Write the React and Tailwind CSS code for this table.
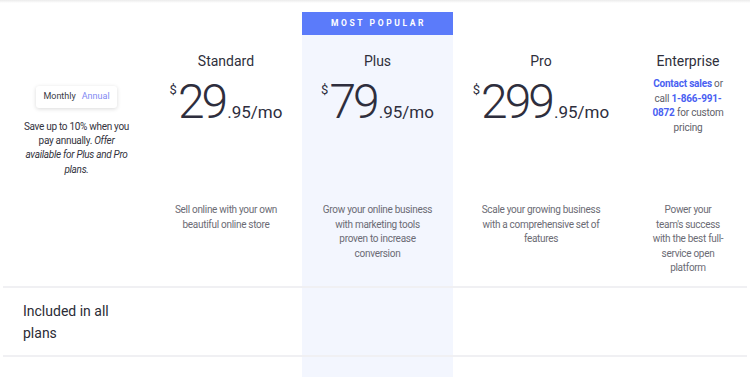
import React from "react";

const plans = [
  {
    name: "Standard",
    dollars: "29",
    desc: "Sell online with your own beautiful online store",
    pad: "px-[20px]",
  },
  {
    name: "Plus",
    dollars: "79",
    desc: "Grow your online business with marketing tools proven to increase conversion",
    pad: "px-[18px]",
    popular: true,
  },
  {
    name: "Pro",
    dollars: "299",
    desc: "Scale your growing business with a comprehensive set of features",
    pad: "px-[24px]",
  },
];

const Price = ({ dollars }) => (
  <div className="flex items-baseline justify-center text-[#2e2e3d]">
    <span className="self-start mt-[5px] text-[13px] leading-none">$</span>
    <span className="text-[48px] leading-none font-light tracking-[-3px] ml-[1px]">
      {dollars}
    </span>
    <span className="text-[17px] leading-none ml-[2px]">.95/mo</span>
  </div>
);

const PlanCell = ({ plan }) => {
  const body = (
    <>
      <h3 className="text-[14px] leading-[20px] text-[#2f2f3b]">{plan.name}</h3>
      <div className="h-[132px] pt-[7px]">
        <Price dollars={plan.dollars} />
      </div>
      <p className={`${plan.pad} text-[10px] leading-[14.5px] tracking-[-0.3px] text-[#6b6b74]`}>
        {plan.desc}
      </p>
    </>
  );

  if (plan.popular) {
    return (
      <div className="flex flex-col pt-[9px] text-center">
        <div className="h-[23px] bg-[#5b7bfa] flex items-center justify-center">
          <span className="text-[8.5px] font-bold tracking-[2.6px] text-white pl-[2px]">
            MOST POPULAR
          </span>
        </div>
        <div className="flex-1 bg-[#f3f6fe] pt-[16px]">{body}</div>
      </div>
    );
  }

  return <div className="pt-[48px] text-center">{body}</div>;
};

export default function App() {
  return (
    <div className="w-[750px] h-[377px] overflow-hidden bg-white font-['Roboto',sans-serif]">
      <div className="h-[3px] bg-gradient-to-b from-[#ebebeb] to-white" />

      <div className="px-[3px]">
        <div className="grid grid-cols-[147px_152px_151px_176px_118px] h-[285px] border-b-2 border-[#f0f0f3]">
          <div className="pt-[83px] text-center">
            <div className="mx-auto w-[81px] h-[22px] bg-white rounded-[3px] shadow-[0_1px_4px_rgba(0,0,0,0.15)] flex items-center justify-center gap-[6px] text-[9px]">
              <span className="text-[#3a3a46]">Monthly</span>
              <span className="text-[#7f89f3]">Annual</span>
            </div>
            <p className="mt-[12px] px-[18px] text-[10px] leading-[14.2px] tracking-[-0.3px] text-[#33333d]">
              Save up to 10% when you pay annually.{" "}
              <em>Offer available for Plus and Pro plans.</em>
            </p>
          </div>

          {plans.map((plan) => (
            <PlanCell key={plan.name} plan={plan} />
          ))}

          <div className="pt-[48px] text-center">
            <h3 className="text-[14px] leading-[20px] text-[#2f2f3b]">Enterprise</h3>
            <div className="h-[132px] pt-[6px] px-[18px]">
              <p className="text-[10px] leading-[14.5px] tracking-[-0.2px] text-[#5f5f69]">
                <span className="font-bold text-[#4a5ff2]">Contact sales</span> or call{" "}
                <span className="font-bold text-[#4a5ff2]">1-866-991-0872</span> for custom
                pricing
              </p>
            </div>
            <p className="px-[22px] text-[10px] leading-[14.5px] tracking-[-0.3px] text-[#6b6b74]">
              Power your team's success with the best full-service open platform
            </p>
          </div>
        </div>

        <div className="grid grid-cols-[147px_152px_151px_176px_118px] h-[69px] border-b-2 border-[#f0f0f3]">
          <div className="pt-[12px] pl-[20px]">
            <h2 className="w-[110px] text-[14px] leading-[22px] text-[#2b2b35]">
              Included in all plans
            </h2>
          </div>
          <div />
          <div className="bg-[#f3f6fe]" />
          <div />
          <div />
        </div>

        <div className="grid grid-cols-[147px_152px_151px_176px_118px] h-[20px]">
          <div />
          <div />
          <div className="bg-[#f3f6fe]" />
          <div />
          <div />
        </div>
      </div>
    </div>
  );
}
